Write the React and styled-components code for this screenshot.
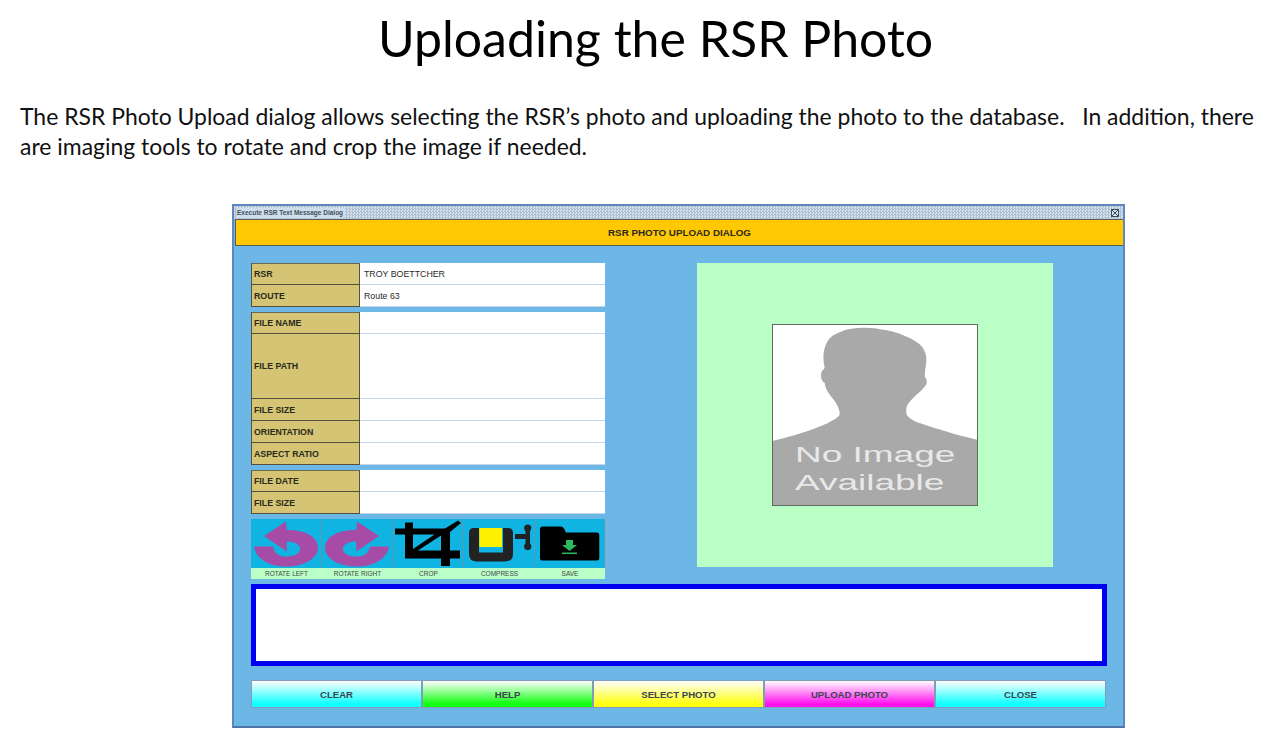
import styled, { createGlobalStyle } from 'styled-components';

const Global = createGlobalStyle`
	html, body { margin: 0; padding: 0; background: #fff; }
	body { width: 1286px; height: 738px; overflow: hidden; font-family: 'Liberation Sans', Arial, sans-serif; }
	* { box-sizing: border-box; }
`;

const Slide = styled.div`
	width: 1286px;
	height: 738px;
	display: flex;
	flex-direction: column;
	overflow: hidden;
`;

const Title = styled.h1`
	margin: 8px 0 0;
	height: 60px;
	text-align: center;
	font-family: 'Lato', sans-serif;
	font-weight: 400;
	font-size: 50px;
	line-height: 60px;
	color: #000;
	width: 1311px;
`;

const Intro = styled.p`
	margin: 33px 0 0 20px;
	width: 1250px;
	font-family: 'Lato', sans-serif;
	font-size: 22.95px;
	line-height: 30px;
	color: #111;
`;

const Dialog = styled.div`
	margin: 43px 0 0 232px;
	width: 893px;
	height: 524px;
	background: #6db7e6;
	border: 2px solid #5f87bd;
	border-bottom-color: #4f74a6;
	display: flex;
	flex-direction: column;
`;

const TitleBar = styled.div`
	height: 13px;
	flex: none;
	display: flex;
	align-items: center;
	justify-content: space-between;
	padding: 0 3px;
	background-color: #c6d7ea;
	background-image: repeating-conic-gradient(#aebfd0 0 25%, #d4e1ee 0 50%);
	background-size: 3px 3px;
`;

const TitleText = styled.span`
	font-size: 6.5px;
	font-weight: 700;
	color: #46505c;
	background: #cfdeed;
	padding-right: 2px;
	line-height: 10px;
`;

const CloseBox = styled.span`
	width: 8px;
	height: 8px;
	border: 1px solid #3c4a5a;
	background: #dce6f0;
	display: flex;
	align-items: center;
	justify-content: center;
	margin-right: 1px;
`;

const Banner = styled.div`
	height: 27px;
	flex: none;
	margin: 0 0 0 1px;
	background: #ffc800;
	border: 1px solid #5c5c50;
	border-width: 1px 0 1px 1px;
	display: flex;
	align-items: center;
	justify-content: center;
	font-size: 9.8px;
	font-weight: 700;
	color: #2a2a20;
`;

const Body = styled.div`
	flex: 1;
	display: flex;
	flex-direction: column;
	padding: 17px 17px 0;
`;

const TopArea = styled.div`
	display: flex;
	align-items: flex-start;
`;

const LeftColumn = styled.div`
	width: 354px;
	flex: none;
	display: flex;
	flex-direction: column;
`;

const FieldGroup = styled.div`
	display: flex;
	flex-direction: column;
	margin-bottom: 5px;
`;

const Row = styled.div`
	display: flex;
	height: ${(p) => p.$height || 22}px;
`;

const Label = styled.div`
	width: 109px;
	flex: none;
	background: #d4c473;
	border: 1px solid #55523c;
	border-top-color: ${(p) => (p.$first ? '#6a6a50' : '#111')};
	border-top-width: ${(p) => (p.$first ? 1 : 0)}px;
	display: flex;
	align-items: center;
	padding-left: 2px;
	font-size: 8.8px;
	font-weight: 700;
	color: #2a2a1c;
`;

const Value = styled.div`
	flex: 1;
	background: #fff;
	border-bottom: 1px solid #c4d6e8;
	display: flex;
	align-items: center;
	padding-left: 4px;
	font-size: 8.8px;
	color: #2a2a2a;
`;

const Tools = styled.div`
	display: flex;
	width: 354px;
`;

const Tool = styled.div`
	flex: 1;
	display: flex;
	flex-direction: column;
`;

const ToolIcon = styled.div`
	height: 49px;
	background: #10b4e2;
	border-right: 1px solid #5c9ab0;
	display: flex;
	align-items: center;
	justify-content: center;
`;

const ToolLabel = styled.div`
	height: 11px;
	background: #bbffc8;
	font-size: 6.5px;
	line-height: 11px;
	text-align: center;
	color: #444;
`;

const PhotoPanel = styled.div`
	margin-left: 92px;
	width: 356px;
	height: 304px;
	background: #b9ffc6;
	display: flex;
	align-items: center;
	justify-content: center;
`;

const PhotoFrame = styled.div`
	position: relative;
	width: 206px;
	height: 182px;
	margin-bottom: 1px;
	background: #fff;
	border: 1px solid #5e6e60;
	overflow: hidden;
`;

const Silhouette = styled.svg`
	display: block;
`;

const NoImage = styled.div`
	position: absolute;
	left: 22px;
	top: 116px;
	font-size: 22px;
	line-height: 28px;
	color: #e8e8e8;
	white-space: nowrap;
	transform: scaleX(1.68);
	transform-origin: left top;
`;

const MessageBox = styled.div`
	margin-top: 5px;
	height: 82px;
	width: 856px;
	background: #fff;
	border: 5px solid #0000f0;
`;

const Buttons = styled.div`
	margin-top: 14px;
	display: flex;
	width: 855px;
`;

const Button = styled.div`
	flex: 1;
	height: 28px;
	border: 1px solid #7f9db8;
	background: linear-gradient(#ffffff, ${(p) => p.$color} 88%);
	display: flex;
	align-items: center;
	justify-content: center;
	font-size: 9.6px;
	font-weight: 700;
	color: #3c4650;
`;

const RotateIcon = ({ flip }) => (
	<svg width="70" height="46" viewBox="0 0 70 46" style={flip ? { transform: 'scaleX(-1)' } : undefined}>
		<path
			fill="#a64ca6"
			d="M13 15 L35 .5 L35.7 9 C55 9 67 16 67 27 C67 38 52 45.5 35.7 45.5 C18 45.5 5 38 3 25.5 L22 25.5 C23 32 28 35.5 34 35.5 C43 35.5 49 33 49 28 C49 23 43 20.5 35.7 20.5 L35.7 30.5 Z"
		/>
	</svg>
);

const CropIcon = () => (
	<svg width="70" height="48" viewBox="0 0 70 48">
		<path
			fill="#000"
			fillRule="evenodd"
			d="M2 8.5 H12 V2.5 H20 V8.5 H52 L65 .5 L68 3 L57 12 V30.5 H67 V38.5 H57 V46 H48 V38.5 H12 V14.5 H2 Z M20 14.5 V29 L41.5 14.5 Z M48 15.5 L25 30.5 H48 Z"
		/>
	</svg>
);

const CompressIcon = () => (
	<svg width="70" height="48" viewBox="0 0 70 48">
		<path
			fill="#222"
			d="M10 8 H15 V32.5 H39 V8 H44 Q49 8 49 13 V34 Q49 41.5 41 41.5 H13 Q5 41.5 5 34 V13 Q5 8 10 8 Z"
		/>
		<rect x="15.3" y="8" width="22.7" height="19" fill="#fff200" />
		<rect x="51" y="14" width="13" height="5" fill="#222" />
		<rect x="61.5" y="7" width="4.5" height="21" fill="#222" />
		<circle cx="63.7" cy="8" r="3.6" fill="#222" />
		<circle cx="63.7" cy="26.5" r="3.6" fill="#222" />
	</svg>
);

const SaveIcon = () => (
	<svg width="62" height="40" viewBox="0 0 62 40">
		<path
			fill="#000"
			d="M3 2.5 H22 Q24 2.5 25 4.5 L27 8.5 H58 Q60.3 8.5 60.3 11 V34 Q60.3 36.5 58 36.5 H3 Q1 36.5 1 34 V5 Q1 2.5 3 2.5 Z"
		/>
		<path fill="#2eb85c" d="M27 16 H34 V21 H38 L30.5 27 L23 21 H27 Z" />
		<rect x="23" y="28.5" width="15" height="1.6" fill="#2eb85c" />
	</svg>
);

const tools = [
	{ label: 'ROTATE LEFT', icon: <RotateIcon /> },
	{ label: 'ROTATE RIGHT', icon: <RotateIcon flip /> },
	{ label: 'CROP', icon: <CropIcon /> },
	{ label: 'COMPRESS', icon: <CompressIcon /> },
	{ label: 'SAVE', icon: <SaveIcon /> },
];

const buttons = [
	{ label: 'CLEAR', color: '#11ffff' },
	{ label: 'HELP', color: '#11ff11' },
	{ label: 'SELECT PHOTO', color: '#ffff11' },
	{ label: 'UPLOAD PHOTO', color: '#ff11ee' },
	{ label: 'CLOSE', color: '#11ffff' },
];

const Fields = ({ rows }) => (
	<FieldGroup>
		{rows.map((r, i) => (
			<Row key={r.label} $height={r.height}>
				<Label $first={i === 0}>{r.label}</Label>
				<Value>{r.value}</Value>
			</Row>
		))}
	</FieldGroup>
);

const App = () => (
	<Slide>
		<Global />
		<Title>Uploading the RSR Photo</Title>
		<Intro>
			The RSR Photo Upload dialog allows selecting the RSR’s photo and uploading the photo to the database. &nbsp; In addition, there are imaging tools to rotate and crop the image if needed.
		</Intro>
		<Dialog>
			<TitleBar>
				<TitleText>Execute RSR Text Message Dialog</TitleText>
				<CloseBox>
					<svg width="6" height="6" viewBox="0 0 6 6">
						<path d="M0 0 L6 6 M6 0 L0 6" stroke="#33404e" strokeWidth="1" />
					</svg>
				</CloseBox>
			</TitleBar>
			<Banner>RSR PHOTO UPLOAD DIALOG</Banner>
			<Body>
				<TopArea>
					<LeftColumn>
						<Fields
							rows={[
								{ label: 'RSR', value: 'TROY BOETTCHER' },
								{ label: 'ROUTE', value: 'Route 63' },
							]}
						/>
						<Fields
							rows={[
								{ label: 'FILE NAME' },
								{ label: 'FILE PATH', height: 65 },
								{ label: 'FILE SIZE' },
								{ label: 'ORIENTATION' },
								{ label: 'ASPECT RATIO' },
							]}
						/>
						<Fields
							rows={[
								{ label: 'FILE DATE' },
								{ label: 'FILE SIZE' },
							]}
						/>
						<Tools>
							{tools.map((t) => (
								<Tool key={t.label}>
									<ToolIcon>{t.icon}</ToolIcon>
									<ToolLabel>{t.label}</ToolLabel>
								</Tool>
							))}
						</Tools>
					</LeftColumn>
					<PhotoPanel>
						<PhotoFrame>
							<Silhouette width="204" height="180" viewBox="0 0 204 180">
								<path
									fill="#a9a9a9"
									d="M0 115.7 C20 111 40 105 55 98 C62 94 67 92 66.7 88 C66 80 60 74 56.7 69.7 C54 66 52 62 51.7 58 C48 56 47 50 49 46 L51.7 43 C50 35 50 28 51.7 23 C54 15 58 11 61.7 9.7 C70 5 78 3 86.7 3 C96 2.5 104 3.5 110 4.7 C120 6 128 9 133 11.4 C142 15 147 19 150 23 C153 28 154 33 153 40 C152 45 152 48 151.7 51.4 C155 55 154 60 151.7 61.4 C149 65 146 68 143.4 69.7 C138 75 134 79 133.4 83 C133 87 133 90 135 91.4 C139 95 143 97 146.7 98 C155 101 165 104 173.4 106.4 C184 110 194 112 204 114.7 L204 180 L0 180 Z"
								/>
							</Silhouette>
							<NoImage>
								No Image
								<br />
								Available
							</NoImage>
						</PhotoFrame>
					</PhotoPanel>
				</TopArea>
				<MessageBox />
				<Buttons>
					{buttons.map((b, i) => (
						<Button key={i} $color={b.color}>
							{b.label}
						</Button>
					))}
				</Buttons>
			</Body>
		</Dialog>
	</Slide>
);

export default App;
